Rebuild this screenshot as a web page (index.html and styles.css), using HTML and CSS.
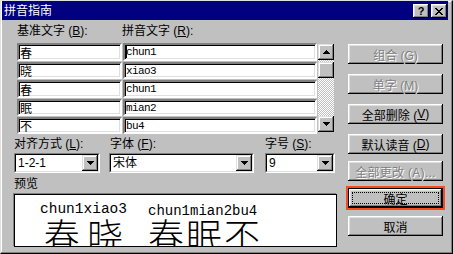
FILE: index.html
```html
<!DOCTYPE html>
<html lang="zh-CN">
<head>
    <meta charset="UTF-8">
    <title>拼音指南</title>
    <link rel="stylesheet" href="styles.css">
</head>
<body>

<div class="window">
    <div class="titlebar">
        <span class="title">拼音指南</span>
        <div class="title-btns">
            <span class="tbtn help">?</span>
            <span class="tbtn close">
                <svg width="8" height="7" viewBox="0 0 8 7"><path d="M0 0h2v1H0zM6 0h2v1H6zM1 1h2v1H1zM5 1h2v1H5zM2 2h4v1H2zM3 3h2v1H3zM2 4h4v1H2zM1 5h2v1H1zM5 5h2v1H5zM0 6h2v1H0zM6 6h2v1H6z"/></svg>
            </span>
        </div>
    </div>

    <div class="content">
        <div class="main">
            <div class="heads">
                <span class="head-base">基准文字 (<u>B</u>):</span>
                <span class="head-py">拼音文字 (<u>R</u>):</span>
            </div>

            <div class="table">
                <div class="rows">
                    <div class="row tall"><div class="cell base">春</div><div class="cell py"><span class="caret"></span>chun1</div></div>
                    <div class="row"><div class="cell base">晓</div><div class="cell py">xiao3</div></div>
                    <div class="row tall"><div class="cell base">春</div><div class="cell py">chun1</div></div>
                    <div class="row"><div class="cell base">眠</div><div class="cell py">mian2</div></div>
                    <div class="row"><div class="cell base">不</div><div class="cell py">bu4</div></div>
                </div>
                <div class="vscroll">
                    <div class="sbtn">
                        <svg width="7" height="4" viewBox="0 0 7 4"><path d="M3 0h1v1h1v1h1v1h1v1H0V3h1V2h1V1h1z"/></svg>
                    </div>
                    <div class="track"><div class="thumb"></div></div>
                    <div class="sbtn">
                        <svg width="7" height="4" viewBox="0 0 7 4"><path d="M0 0h7v1H6v1H5v1H4v1H3V3H2V2H1V1H0z"/></svg>
                    </div>
                </div>
            </div>

            <div class="options">
                <div class="field f-align">
                    <label>对齐方式 (<u>L</u>):</label>
                    <div class="combo"><div class="combo-in">
                        <span class="combo-text">1-2-1</span>
                        <span class="drop"><svg width="7" height="4" viewBox="0 0 7 4"><path d="M0 0h7v1H6v1H5v1H4v1H3V3H2V2H1V1H0z"/></svg></span>
                    </div></div>
                </div>
                <div class="field f-font">
                    <label>字体 (<u>F</u>):</label>
                    <div class="combo"><div class="combo-in">
                        <span class="combo-text">宋体</span>
                        <span class="drop"><svg width="7" height="4" viewBox="0 0 7 4"><path d="M0 0h7v1H6v1H5v1H4v1H3V3H2V2H1V1H0z"/></svg></span>
                    </div></div>
                </div>
                <div class="field f-size">
                    <label>字号 (<u>S</u>):</label>
                    <div class="combo"><div class="combo-in">
                        <span class="combo-text">9</span>
                        <span class="drop"><svg width="7" height="4" viewBox="0 0 7 4"><path d="M0 0h7v1H6v1H5v1H4v1H3V3H2V2H1V1H0z"/></svg></span>
                    </div></div>
                </div>
            </div>

            <div class="preview-label">预览</div>
            <div class="preview">
                <div class="ruby r1">
                    <div class="pinyin">chun1xiao3</div>
                    <div class="hz"><span>春</span><span>晓</span></div>
                </div>
                <div class="ruby r2">
                    <div class="pinyin">chun1mian2bu4</div>
                    <div class="hz"><span>春</span><span>眠</span><span>不</span></div>
                </div>
            </div>
        </div>

        <div class="buttons">
            <div class="btn disabled">组合 (G)</div>
            <div class="btn disabled">单字 (M)</div>
            <div class="btn">全部删除 (<u>V</u>)</div>
            <div class="btn">默认读音 (<u>D</u>)</div>
            <div class="btn disabled narrow">全部更改 (A)...</div>
            <div class="btn default"><span class="focus">确定</span></div>
            <div class="btn cancel">取消</div>
        </div>
    </div>
</div>

</body>
</html>
```

FILE: styles.css
```css
body {
    margin: 0;
    background-color: #c0c0c0;
    font-family: "Liberation Sans", "Noto Sans CJK SC", sans-serif;
    font-size: 12px;
    color: #000;
}
u {
    text-decoration: underline;
    text-underline-offset: 1px;
}
.window {
    width: 453px;
    height: 254px;
    box-sizing: border-box;
    border: 1px solid;
    border-color: #dfdfdf #000 #000 #dfdfdf;
    box-shadow: inset -1px -1px #808080, inset 1px 1px #fff;
    padding: 0 4px 0 1px;
    overflow: hidden;
}

/* title bar */
.titlebar {
    height: 19px;
    background-color: #000080;
    color: #fff;
    display: flex;
    justify-content: space-between;
    padding: 0 1px 0 2px;
}
.title {
    line-height: 21px;
    font-size: 12px;
}
.title-btns {
    display: flex;
    gap: 2px;
    padding-top: 3px;
}
.tbtn {
    width: 16px;
    height: 14px;
    background-color: #c0c0c0;
    color: #000;
    box-shadow: inset -1px -1px #000, inset 1px 1px #fff, inset -2px -2px #808080, inset 2px 2px #dfdfdf;
    display: flex;
    align-items: center;
    justify-content: center;
}
.help {
    font-weight: bold;
    font-size: 11px;
    line-height: 14px;
}

/* layout */
.content {
    display: flex;
    padding: 4px 0 0 12px;
}
.main {
    width: 323px;
}
.heads {
    display: flex;
    height: 14px;
    line-height: 14px;
    margin: 0 0 5px 3px;
}
.head-base {
    width: 105px;
}

/* grid */
.table {
    display: flex;
    margin-left: 3px;
}
.rows {
    display: flex;
    flex-direction: column;
}
.row {
    display: flex;
    gap: 1px;
    height: 18px;
    padding-bottom: 1px;
    box-sizing: border-box;
}
.row.tall {
    height: 19px;
}
.cell {
    box-sizing: border-box;
    background-color: #fff;
    border: 2px solid;
    border-color: #808080 #fff #fff #808080;
    box-shadow: inset 1px 1px #000, inset -1px -1px #dfdfdf;
    padding-left: 1px;
    display: flex;
    align-items: center;
}
.base {
    width: 105px;
}
.py {
    width: 194px;
    font-family: "Liberation Mono", monospace;
    font-size: 11px;
    letter-spacing: -0.6px;
}
.caret {
    width: 1px;
    height: 12px;
    background-color: #000;
    margin-right: -1px;
}

/* scrollbar */
.vscroll {
    width: 16px;
    height: 88px;
    margin: 1px 0 0 1px;
    display: flex;
    flex-direction: column;
}
.sbtn, .thumb, .drop {
    background-color: #c0c0c0;
    box-shadow: inset -1px -1px #000, inset 1px 1px #dfdfdf, inset -2px -2px #808080, inset 2px 2px #fff;
    display: flex;
    align-items: center;
    justify-content: center;
}
.sbtn {
    height: 16px;
}
.track {
    flex: 1;
    padding-top: 2px;
    background-color: #fff;
    background-image: conic-gradient(#c0c0c0 25%, transparent 0 50%, #c0c0c0 0 75%, transparent 0);
    background-size: 2px 2px;
}
.thumb {
    height: 16px;
}

/* options */
.options {
    display: flex;
    margin-top: 2px;
}
.field label {
    display: block;
    line-height: 14px;
    margin-bottom: 2px;
}
.f-align {
    width: 86px;
    margin-right: 9px;
}
.f-font {
    width: 145px;
    margin-right: 11px;
}
.f-font label {
    padding-left: 1px;
}
.f-size {
    width: 70px;
}
.combo {
    height: 20px;
    box-sizing: border-box;
    border: 1px solid;
    border-color: #808080 #fff #fff #808080;
}
.combo-in {
    height: 100%;
    box-sizing: border-box;
    border: 1px solid;
    border-color: #000 #dfdfdf #dfdfdf #000;
    background-color: #fff;
    display: flex;
}
.combo-text {
    flex: 1;
    padding-left: 2px;
    line-height: 16px;
}
.drop {
    width: 16px;
    height: 16px;
}

/* preview */
.preview-label {
    margin-top: 4px;
    line-height: 14px;
}
.preview {
    margin-top: 3px;
    height: 53px;
    box-sizing: border-box;
    background-color: #fff;
    border: 1px solid #000;
    box-shadow: -1px -1px #808080;
    overflow: hidden;
    display: flex;
    align-items: flex-start;
    gap: 21px;
    padding: 7px 0 0 25px;
}
.ruby {
    display: flex;
    flex-direction: column;
}
.pinyin {
    font-family: "Liberation Mono", monospace;
    font-size: 14.5px;
    line-height: 14px;
    white-space: nowrap;
}
.hz {
    display: flex;
    justify-content: space-around;
    font-family: "Noto Sans CJK SC", sans-serif;
    font-weight: 300;
    font-size: 36px;
    line-height: 36px;
}
.r2 .pinyin {
    font-size: 14px;
    line-height: 10px;
    margin-top: 4px;
}
.r2 .hz {
    justify-content: flex-start;
    gap: 2px;
}

/* buttons */
.buttons {
    width: 95px;
    margin: 20px 0 0 11px;
    display: flex;
    flex-direction: column;
}
.btn {
    height: 20px;
    box-sizing: border-box;
    background-color: #c0c0c0;
    box-shadow: inset -1px -1px #000, inset 1px 1px #fff, inset -2px -2px #808080, inset 2px 2px #dfdfdf;
    display: flex;
    align-items: center;
    justify-content: center;
    margin-bottom: 10px;
}
.btn.disabled {
    color: #808080;
    text-shadow: 1px 1px #fff;
}
.btn.narrow {
    letter-spacing: 0.3px;
}
.buttons .btn:nth-child(4),
.buttons .btn:nth-child(5) {
    margin-bottom: 7px;
}
.btn.default {
    border: 1px solid #000;
    margin-bottom: 8px;
    outline: 2px solid #fa4a1e;
}
.focus {
    align-self: stretch;
    flex: 1;
    margin: 3px;
    border: 1px dotted #000;
    display: flex;
    align-items: center;
    justify-content: center;
}
```
